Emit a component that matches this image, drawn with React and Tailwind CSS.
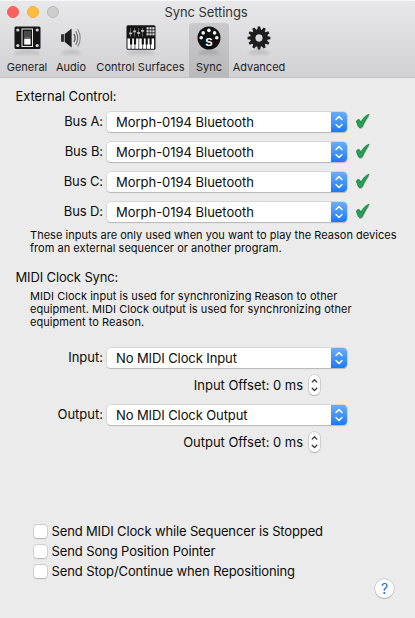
import React from "react";

function Reflection({ width }) {
  return (
    <div
      className="h-[7px] rounded-[50%] bg-gradient-to-b from-black/15 to-transparent blur-[1px]"
      style={{ width }}
    />
  );
}

function GeneralIcon() {
  return (
    <svg width="27" height="24" viewBox="0 0 27 24">
      <rect x="0.5" y="0.5" width="26" height="22.5" rx="1.5" fill="#161616" />
      <rect x="8" y="3" width="10.5" height="17.5" fill="#161616" stroke="#e8e8e8" strokeWidth="1" />
      <rect x="10.3" y="5" width="6.2" height="13.5" fill="#777" />
      <rect x="10.3" y="5" width="6.2" height="6.5" fill="#4a4a4a" />
      <rect x="10.3" y="13" width="6.2" height="5.5" fill="#fff" />
      {[3.8, 23.2].map((x) =>
        [4, 19.5].map((y) => <circle key={x + "-" + y} cx={x} cy={y} r="1.6" fill="#d5d5d5" />)
      )}
    </svg>
  );
}

function AudioIcon() {
  return (
    <svg width="22" height="24" viewBox="0 0 22 24" fill="none">
      <path d="M1 8.2h3.2v7.6H1z" fill="#333" />
      <path d="M4.8 8 11.6 2.5v19L4.8 16z" fill="#1c1c1c" />
      <path d="M14 8q2.2 4 0 8" stroke="#555" strokeWidth="1.3" />
      <path d="M15.8 5.2q3.8 6.8 0 13.6" stroke="#777" strokeWidth="1.2" />
      <path d="M17.7 3.2q5 8.8 0 17.6" stroke="#8a8a8a" strokeWidth="1.1" />
    </svg>
  );
}

function KeyboardIcon() {
  return (
    <svg width="30" height="25" viewBox="0 0 30 25">
      <rect x="0.5" y="0.3" width="29" height="24.5" rx="1.5" fill="#141414" />
      {[4.5, 8.5, 12.5, 16.5].map((x, i) => (
        <g key={x} fill="#bbb">
          <rect x={x - 0.3} y="3" width="0.7" height="8.5" fill="#888" />
          <rect x={x - 1.4} y={[7.5, 5.5, 7, 5][i]} width="3" height="1.8" />
        </g>
      ))}
      {[20.5, 23.4, 26.3].map((x) =>
        [2.2, 5.2, 8.2].map((y) => <rect key={x + "-" + y} x={x} y={y} width="2.2" height="2.2" fill="#d8d8d8" />)
      )}
      {[0, 1, 2, 3, 4, 5, 6].map((i) => (
        <rect key={i} x={1.5 + i * 3.9} y="13.5" width="3.2" height="10.3" fill="#fff" />
      ))}
      {[1, 2, 4, 5, 6].map((i) => (
        <rect key={i} x={0.1 + i * 3.9} y="13" width="2.2" height="6.5" fill="#141414" />
      ))}
    </svg>
  );
}

function SyncIcon() {
  const dots = [
    [4.2, 11.7],
    [6.2, 6.9],
    [11.9, 4.4],
    [17.6, 6.9],
    [19.8, 11.7],
  ];
  return (
    <svg width="24" height="24" viewBox="0 0 24 24">
      <circle cx="12" cy="12" r="11.5" fill="#101010" />
      {dots.map(([x, y]) => (
        <circle key={x} cx={x} cy={y} r="1.8" fill="#f4f4f4" />
      ))}
      <text x="12" y="20" textAnchor="middle" fill="#fff" className="font-['Liberation_Sans',sans-serif] text-[11px] font-bold">
        S
      </text>
    </svg>
  );
}

function GearIcon() {
  const teeth = Array.from({ length: 12 }, (_, i) => i * 30);
  return (
    <svg width="24" height="24" viewBox="0 0 24 24">
      {teeth.map((a) => (
        <path key={a} d="M10.2 4 10.8.6h2.4l.6 3.4z" fill="#1d1d1d" transform={`rotate(${a} 12 12)`} />
      ))}
      <circle cx="12" cy="12" r="6.1" fill="none" stroke="#1d1d1d" strokeWidth="5.4" />
      <circle cx="12" cy="12" r="3.4" fill="#d9d8da" />
    </svg>
  );
}

function Tool({ label, icon, width, reflection, active, tracking }) {
  return (
    <div
      style={{ width }}
      className={
        "flex h-[55px] shrink-0 flex-col items-center rounded-t-[4px] pt-[2px] " +
        (active ? "bg-gradient-to-b from-[#c9c8ca] to-[#b9b8ba]" : "")
      }
    >
      <div className="flex h-[25px] items-center">{icon}</div>
      <Reflection width={reflection} />
      <div className={"mt-[3px] whitespace-nowrap text-[11px] leading-[14px] text-[#1f1f1f] " + tracking}>{label}</div>
    </div>
  );
}

function Chevrons() {
  return (
    <svg width="8" height="14" viewBox="0 0 8 14" fill="none" stroke="#fff" strokeWidth="1.4" strokeLinecap="round" strokeLinejoin="round">
      <path d="M1 4.6 4 1.5l3 3.1M1 9.5l3 3.1 3-3.1" />
    </svg>
  );
}

function Select({ value, tracking }) {
  return (
    <div className="flex h-5 w-60 shrink-0 overflow-hidden rounded-[4px] bg-white shadow-[0_0_0_0.5px_#c4c4c4,0_1px_1px_#b0b0b0]">
      <div className={"flex-1 whitespace-nowrap pl-[9px] text-[13px] leading-[21px] " + tracking}>{value}</div>
      <div className="flex w-4 items-center justify-center bg-gradient-to-b from-[#68aefa] to-[#1a78f5]">
        <Chevrons />
      </div>
    </div>
  );
}

function Field({ label, value, checked, tracking, labelTracking }) {
  return (
    <div className="flex h-5 items-center">
      <div className={"mr-[4px] w-[103px] shrink-0 whitespace-nowrap pb-[2px] text-right text-[13px] leading-[18px] " + labelTracking}>{label}</div>
      <Select value={value} tracking={tracking} />
      {checked && (
        <svg className="mb-[2px] ml-[8px]" width="16" height="17" viewBox="0 0 16 17">
          <path d="M1.6 8.7C2.3 7 4.2 6.4 5.1 7.8l.6 2C7.8 5.8 10.5 2.7 14.2 1.6 11.6 5.2 9.5 8.9 7.4 13.4c-.8 1.9-3.6 2-4.2.2z" fill="#666" opacity=".5" transform="translate(.6 .9)" />
          <path d="M1.4 8.3C2.1 6.5 4.1 5.9 5 7.4l.7 2.1C7.7 5.5 10.4 2.3 14.1 1.2 11.5 4.9 9.4 8.6 7.3 13.1c-.8 1.8-3.4 1.9-4.1.2z" fill="#20a452" stroke="#167a3c" strokeWidth=".8" />
        </svg>
      )}
    </div>
  );
}

function Offset({ label, tracking }) {
  return (
    <div className="flex h-[21px] w-[320px] items-center justify-end">
      <div className={"mr-[6px] whitespace-nowrap text-[13px] leading-[18px] " + tracking}>{label}</div>
      <div className="flex h-5 w-[11px] items-center justify-center rounded-[5px] bg-white shadow-[0_0_0_0.5px_#b5b5b5,0_1px_1px_#b8b8b8]">
        <svg width="7" height="14" viewBox="0 0 7 14" fill="none" stroke="#333" strokeWidth="1.3" strokeLinecap="round" strokeLinejoin="round">
          <path d="M1.2 4.1 3.5 1.8l2.3 2.3M1.2 10.3l2.3 2.3 2.3-2.3" />
        </svg>
      </div>
    </div>
  );
}

function Check({ label, tracking }) {
  return (
    <div className="flex h-5 items-center">
      <div className="h-[13px] w-[13px] shrink-0 rounded-[3px] bg-white shadow-[0_0_0_0.5px_#b8b8b8,0_0.5px_1px_#bbb]" />
      <div className={"ml-[4.5px] whitespace-nowrap text-[13px] leading-[18px] " + tracking}>{label}</div>
    </div>
  );
}

const buses = ["A", "B", "C", "D"];

export default function App() {
  return (
    <div className="flex h-[618px] w-[415px] flex-col overflow-hidden bg-[#ebebeb] font-['Inter',sans-serif] text-[#0c0c0c]">
      <div className="h-[78px] shrink-0 border-b border-[#c3c2c4] border-t border-t-[#f7f6f8] bg-gradient-to-b from-[#e8e7e9] to-[#d1d0d2]">
        <div className="flex h-[22px] items-center">
          <div className="flex w-[136px] gap-2 pb-px pl-[6.5px]">
            <div className="size-3 rounded-full border border-[#f0605c] bg-[#fc605c]" />
            <div className="size-3 rounded-full border border-[#eeb040] bg-[#fcbc40]" />
            <div className="size-3 rounded-full border border-[#bcbbbc] bg-[#cecdce]" />
          </div>
          <div className="w-[140px] whitespace-nowrap text-center text-[13px] leading-[18px] tracking-[-0.08px] text-[#333]">Sync Settings</div>
        </div>
        <div className="flex pl-[4px]">
          <Tool label="General" icon={<GeneralIcon />} width={46} reflection={26} tracking="" />
          <Tool label="Audio" icon={<AudioIcon />} width={42} reflection={20} tracking="" />
          <Tool label="Control Surfaces" icon={<KeyboardIcon />} width={97} reflection={28} tracking="tracking-[0.05px]" />
          <Tool label="Sync" icon={<SyncIcon />} width={40} reflection={22} active tracking="" />
          <Tool label="Advanced" icon={<GearIcon />} width={60} reflection={22} tracking="" />
        </div>
      </div>

      <div className="flex flex-1 flex-col">
        <h2 className="mt-[9px] pl-[15.5px] text-[13px] leading-[18px] tracking-[-0.08px]">External Control:</h2>
        <div className="mt-[7px] flex flex-col gap-[10px]">
          {buses.map((b) => (
            <Field key={b} label={`Bus ${b}:`} value="Morph-0194 Bluetooth" checked tracking="tracking-[-0.03px]" labelTracking="tracking-[-0.1px]" />
          ))}
        </div>
        <div className="mt-[7px] whitespace-nowrap pl-[30px] text-[11px] leading-[13px]">
          <p className="tracking-[0.025px]">These inputs are only used when you want to play the Reason devices</p>
          <p className="tracking-[0.025px]">from an external sequencer or another program.</p>
        </div>
        <h2 className="mt-[13px] pl-[15.5px] text-[13px] leading-[18px] tracking-[-0.14px]">MIDI Clock Sync:</h2>
        <div className="mt-[4px] whitespace-nowrap pl-[30px] text-[11px] leading-[13px] tracking-[0.05px]">
          <p>MIDI Clock input is used for synchronizing Reason to other</p>
          <p>equipment. MIDI Clock output is used for synchronizing other</p>
          <p>equipment to Reason.</p>
        </div>
        <div className="mt-[19px]">
          <Field label="Input:" value="No MIDI Clock Input" tracking="tracking-[-0.1px]" labelTracking="" />
        </div>
        <div className="mt-[6px]">
          <Offset label="Input Offset: 0 ms" tracking="tracking-[-0.03px]" />
        </div>
        <div className="mt-[10px]">
          <Field label="Output:" value="No MIDI Clock Output" tracking="tracking-[-0.1px]" labelTracking="" />
        </div>
        <div className="mt-[6px]">
          <Offset label="Output Offset: 0 ms" tracking="tracking-[-0.03px]" />
        </div>
        <div className="mt-[69px] pl-[34px]">
          <Check label="Send MIDI Clock while Sequencer is Stopped" tracking="tracking-[-0.14px]" />
          <Check label="Send Song Position Pointer" tracking="tracking-[-0.11px]" />
          <Check label="Send Stop/Continue when Repositioning" tracking="tracking-[-0.11px]" />
        </div>
        <div className="mt-[-2px] flex justify-end pr-[21px]">
          <div className="flex size-[19px] items-center justify-center rounded-full bg-white text-[14px] leading-none text-[#1a6ee0] shadow-[0_0_0_0.5px_#b5b5b5,0_1px_1px_#b0b0b0]">?</div>
        </div>
      </div>
    </div>
  );
}
